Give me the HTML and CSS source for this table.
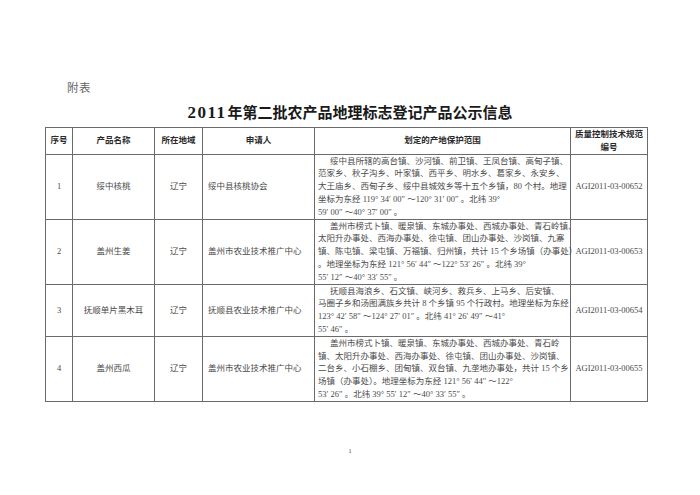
FILE: index.html
```html
<!DOCTYPE html>
<html lang="zh">
<head>
<meta charset="utf-8">
<title>附表</title>
<link rel="stylesheet" href="styles.css">
</head>
<body>
<div class="page">
  <div class="fubiao">附表</div>
  <div class="title"><span class="num">2011</span>年第二批农产品地理标志登记产品公示信息</div>
  <table class="info">
    <colgroup>
      <col class="c1"><col class="c2"><col class="c3"><col class="c4"><col class="c5"><col class="c6">
    </colgroup>
    <thead>
      <tr>
        <th>序号</th>
        <th>产品名称</th>
        <th>所在地域</th>
        <th>申请人</th>
        <th>划定的产地保护范围</th>
        <th>质量控制技术规范<br>编号</th>
      </tr>
    </thead>
    <tbody>
      <tr>
        <td class="no">1</td>
        <td class="ctr">绥中核桃</td>
        <td class="ctr">辽宁</td>
        <td class="app">绥中县核桃协会</td>
        <td class="area">
          <div class="ln ind">绥中县所辖的高台镇、沙河镇、前卫镇、王凤台镇、高甸子镇、</div>
          <div class="ln">范家乡、秋子沟乡、叶家镇、西平乡、明水乡、葛家乡、永安乡、</div>
          <div class="ln">大王庙乡、西甸子乡、绥中县城效乡等十五个乡镇，80 个村。地理</div>
          <div class="ln">坐标为东经 119° 34′ 00″ ～120° 31′ 00″ 。北纬 39°</div>
          <div class="ln">59′ 00″ ～40° 37′ 00″ 。</div>
        </td>
        <td class="code">AGI2011-03-00652</td>
      </tr>
      <tr>
        <td class="no">2</td>
        <td class="ctr">盖州生姜</td>
        <td class="ctr">辽宁</td>
        <td class="app">盖州市农业技术推广中心</td>
        <td class="area">
          <div class="ln ind">盖州市榜式卜镇、暖泉镇、东城办事处、西城办事处、青石岭镇、</div>
          <div class="ln">太阳升办事处、西海办事处、徐屯镇、团山办事处、沙岗镇、九寨</div>
          <div class="ln">镇、陈屯镇、梁屯镇、万福镇、归州镇，共计 15 个乡场镇（办事处）</div>
          <div class="ln">。地理坐标为东经 121° 56′ 44″ ～122° 53′ 26″ 。北纬 39°</div>
          <div class="ln">55′ 12″ ～40° 33′ 55″ 。</div>
        </td>
        <td class="code">AGI2011-03-00653</td>
      </tr>
      <tr>
        <td class="no">3</td>
        <td class="ctr">抚顺单片黑木耳</td>
        <td class="ctr">辽宁</td>
        <td class="app">抚顺县农业技术推广中心</td>
        <td class="area">
          <div class="ln ind">抚顺县海浪乡、石文镇、峡河乡、救兵乡、上马乡、后安镇、</div>
          <div class="ln">马圈子乡和汤图满族乡共计 8 个乡镇 95 个行政村。地理坐标为东经</div>
          <div class="ln">123° 42′ 58″ ～124° 27′ 01″ 。北纬 41° 26′ 49″ ～41°</div>
          <div class="ln">55′ 46″ 。</div>
        </td>
        <td class="code">AGI2011-03-00654</td>
      </tr>
      <tr>
        <td class="no">4</td>
        <td class="ctr">盖州西瓜</td>
        <td class="ctr">辽宁</td>
        <td class="app">盖州市农业技术推广中心</td>
        <td class="area">
          <div class="ln ind">盖州市榜式卜镇、暖泉镇、东城办事处、西城办事处、青石岭</div>
          <div class="ln">镇、太阳升办事处、西海办事处、徐屯镇、团山办事处、沙岗镇、</div>
          <div class="ln">二台乡、小石棚乡、团甸镇、双台镇、九垄地办事处，共计 15 个乡</div>
          <div class="ln">场镇（办事处）。地理坐标为东经 121° 56′ 44″ ～122°</div>
          <div class="ln">53′ 26″ 。北纬 39° 55′ 12″ ～40° 33′ 55″ 。</div>
        </td>
        <td class="code">AGI2011-03-00655</td>
      </tr>
    </tbody>
  </table>
  <div class="pageno">1</div>
</div>
</body>
</html>
```

FILE: styles.css
```css
html, body {
  margin: 0;
  padding: 0;
  background: #ffffff;
}

.page {
  width: 700px;
  height: 495px;
  padding-top: 81px;
  box-sizing: border-box;
  font-family: "Liberation Serif", "Noto Sans CJK SC", serif;
  color: #3c3c3c;
  overflow: hidden;
}

.fubiao {
  margin-left: 67px;
  font-size: 11.5px;
  line-height: 14px;
  color: #666;
  letter-spacing: 0.5px;
}

.title {
  margin-top: 8px;
  text-align: center;
  font-size: 15px;
  line-height: 20px;
  font-weight: bold;
  color: #1a1a1a;
}

.title .num {
  font-size: 17px;
  letter-spacing: 1.5px;
  margin-right: 1px;
}

.info {
  margin-top: 4px;
  margin-left: 45px;
  width: 602px;
  border-collapse: collapse;
  table-layout: fixed;
  font-size: 8.5px;
  line-height: 12.8px;
}

.info .c1 { width: 27px; }
.info .c2 { width: 82px; }
.info .c3 { width: 48px; }
.info .c4 { width: 112px; }
.info .c5 { width: 256px; }
.info .c6 { width: 77px; }

.info th,
.info td {
  border: 1px solid #6a6a6a;
  padding: 0;
  vertical-align: middle;
}

.info th {
  font-weight: bold;
  color: #2a2a2a;
  text-align: center;
}

.info td {
  color: #4a4a4a;
}

.info .no,
.info .ctr,
.info .code {
  text-align: center;
}

.info .app {
  padding-left: 5px;
}

.info .area {
  padding: 0 2px 0 3px;
}

.info .ln {
  white-space: nowrap;
}

.info .ind {
  text-indent: 12px;
}

.pageno {
  margin-top: 44px;
  text-align: center;
  font-size: 7px;
  line-height: 10px;
  color: #555;
}
```
